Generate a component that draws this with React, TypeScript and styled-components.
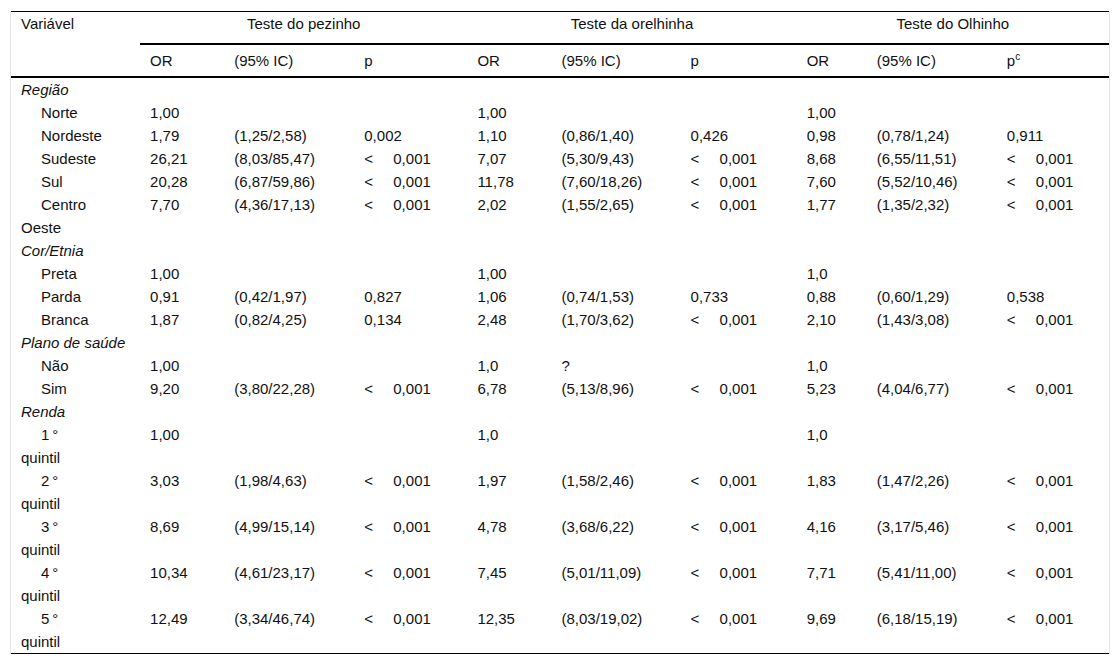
import React from 'react';
import styled, { createGlobalStyle } from 'styled-components';

const GlobalStyle = createGlobalStyle`
  html, body {
    margin: 0;
    padding: 0;
    background: #ffffff;
  }
  body {
    font-family: "Liberation Sans", Arial, sans-serif;
    color: #111111;
  }
`;

const Page = styled.div`
  padding: 11px 10px 0 10px;
`;

const Frame = styled.div`
  width: 1098px;
  border-left: 1px solid #e4e4e4;
  border-right: 1px solid #e4e4e4;
`;

const Table = styled.table`
  width: 100%;
  border-collapse: collapse;
  table-layout: fixed;
  font-size: 15px;
  line-height: 23px;
  border-top: 1px solid #000;
  border-bottom: 1px solid #000;
`;

const HeadCell = styled.th<{ $center?: boolean; $top?: boolean }>`
  font-weight: normal;
  text-align: ${(p) => (p.$center ? 'center' : 'left')};
  vertical-align: top;
  padding: ${(p) => (p.$top ? '0 10px 8px' : '4px 10px')};
`;

const GroupRow = styled.tr`
  th + th {
    border-bottom: 2px solid #000;
  }
`;

const SubRow = styled.tr`
  border-bottom: 2px solid #000;
`;

const Sup = styled.sup`
  font-size: 10px;
  line-height: 0;
  vertical-align: 6px;
`;

const Cell = styled.td`
  padding: 0 10px;
  vertical-align: top;
  white-space: nowrap;
`;

const LabelCell = styled.td`
  padding: 0 10px;
  vertical-align: top;
`;

const Section = styled.span`
  font-style: italic;
`;

const Indent = styled.span`
  display: inline-block;
  width: 20px;
`;

const Less = styled.span`
  display: inline-block;
  width: 29px;
`;

const widths = [129, 84, 130, 113, 84, 129, 116, 70, 130, 112];

type Row = { section?: string; label?: string[]; v?: string[] };

const lt = '<0,001';

const rows: Row[] = [
  { section: 'Região' },
  { label: ['Norte'], v: ['1,00', '', '', '1,00', '', '', '1,00', '', ''] },
  { label: ['Nordeste'], v: ['1,79', '(1,25/2,58)', '0,002', '1,10', '(0,86/1,40)', '0,426', '0,98', '(0,78/1,24)', '0,911'] },
  { label: ['Sudeste'], v: ['26,21', '(8,03/85,47)', lt, '7,07', '(5,30/9,43)', lt, '8,68', '(6,55/11,51)', lt] },
  { label: ['Sul'], v: ['20,28', '(6,87/59,86)', lt, '11,78', '(7,60/18,26)', lt, '7,60', '(5,52/10,46)', lt] },
  { label: ['Centro', 'Oeste'], v: ['7,70', '(4,36/17,13)', lt, '2,02', '(1,55/2,65)', lt, '1,77', '(1,35/2,32)', lt] },
  { section: 'Cor/Etnia' },
  { label: ['Preta'], v: ['1,00', '', '', '1,00', '', '', '1,0', '', ''] },
  { label: ['Parda'], v: ['0,91', '(0,42/1,97)', '0,827', '1,06', '(0,74/1,53)', '0,733', '0,88', '(0,60/1,29)', '0,538'] },
  { label: ['Branca'], v: ['1,87', '(0,82/4,25)', '0,134', '2,48', '(1,70/3,62)', lt, '2,10', '(1,43/3,08)', lt] },
  { section: 'Plano de saúde' },
  { label: ['Não'], v: ['1,00', '', '', '1,0', '?', '', '1,0', '', ''] },
  { label: ['Sim'], v: ['9,20', '(3,80/22,28)', lt, '6,78', '(5,13/8,96)', lt, '5,23', '(4,04/6,77)', lt] },
  { section: 'Renda' },
  { label: ['1\u2009°', 'quintil'], v: ['1,00', '', '', '1,0', '', '', '1,0', '', ''] },
  { label: ['2\u2009°', 'quintil'], v: ['3,03', '(1,98/4,63)', lt, '1,97', '(1,58/2,46)', lt, '1,83', '(1,47/2,26)', lt] },
  { label: ['3\u2009°', 'quintil'], v: ['8,69', '(4,99/15,14)', lt, '4,78', '(3,68/6,22)', lt, '4,16', '(3,17/5,46)', lt] },
  { label: ['4\u2009°', 'quintil'], v: ['10,34', '(4,61/23,17)', lt, '7,45', '(5,01/11,09)', lt, '7,71', '(5,41/11,00)', lt] },
  { label: ['5\u2009°', 'quintil'], v: ['12,49', '(3,34/46,74)', lt, '12,35', '(8,03/19,02)', lt, '9,69', '(6,18/15,19)', lt] },
];

function Value({ text }: { text: string }) {
  if (text.startsWith('<')) {
    return (
      <>
        <Less>&lt;</Less>
        {text.slice(1)}
      </>
    );
  }
  return <>{text}</>;
}

function BodyRow({ row }: { row: Row }) {
  if (row.section) {
    return (
      <tr>
        <LabelCell>
          <Section>{row.section}</Section>
        </LabelCell>
        <td colSpan={9} />
      </tr>
    );
  }
  const [first, second] = row.label || [];
  return (
    <tr>
      <LabelCell>
        <Indent />
        {first}
        {second && (
          <>
            <br />
            {second}
          </>
        )}
      </LabelCell>
      {(row.v || []).map((t, i) => (
        <Cell key={i}>
          <Value text={t} />
        </Cell>
      ))}
    </tr>
  );
}

function App() {
  return (
    <>
      <GlobalStyle />
      <Page>
        <Frame>
          <Table>
            <colgroup>
              {widths.map((w, i) => (
                <col key={i} style={{ width: w }} />
              ))}
            </colgroup>
            <thead>
              <GroupRow>
                <HeadCell rowSpan={2} $top>
                  Variável
                </HeadCell>
                <HeadCell colSpan={3} $center $top>
                  Teste do pezinho
                </HeadCell>
                <HeadCell colSpan={3} $center $top>
                  Teste da orelhinha
                </HeadCell>
                <HeadCell colSpan={3} $center $top>
                  Teste do Olhinho
                </HeadCell>
              </GroupRow>
              <SubRow>
                <HeadCell>OR</HeadCell>
                <HeadCell>(95% IC)</HeadCell>
                <HeadCell>p</HeadCell>
                <HeadCell>OR</HeadCell>
                <HeadCell>(95% IC)</HeadCell>
                <HeadCell>p</HeadCell>
                <HeadCell>OR</HeadCell>
                <HeadCell>(95% IC)</HeadCell>
                <HeadCell>
                  p<Sup>c</Sup>
                </HeadCell>
              </SubRow>
            </thead>
            <tbody>
              {rows.map((r, i) => (
                <BodyRow key={i} row={r} />
              ))}
            </tbody>
          </Table>
        </Frame>
      </Page>
    </>
  );
}

export default App;
